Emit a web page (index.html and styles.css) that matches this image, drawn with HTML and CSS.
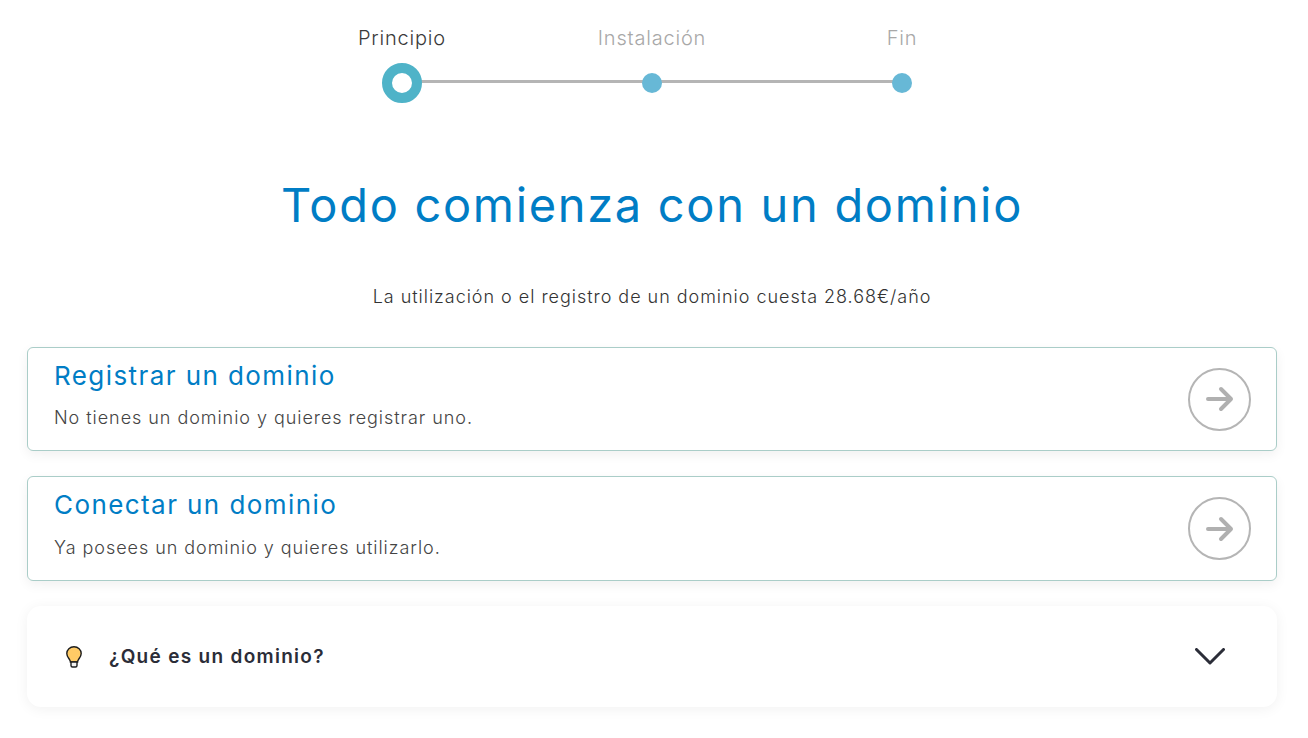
FILE: index.html
```html
<!DOCTYPE html>
<html lang="es">
<head>
<meta charset="utf-8">
<title>Todo comienza con un dominio</title>
<link rel="stylesheet" href="styles.css">
</head>
<body>
<main class="page">
  <ol class="stepper">
    <li class="step step-active"><span class="step-label">Principio</span><span class="dot"></span></li>
    <li class="step"><span class="step-label">Instalación</span><span class="dot"></span></li>
    <li class="step"><span class="step-label">Fin</span><span class="dot"></span></li>
  </ol>
  <h1 class="title">Todo comienza con un dominio</h1>
  <p class="subtitle">La utilización o el registro de un dominio cuesta 28.68€/año</p>
  <div class="options">
    <a class="option">
      <div class="option-text">
        <h2 class="option-title">Registrar un dominio</h2>
        <p class="option-desc">No tienes un dominio y quieres registrar uno.</p>
      </div>
      <span class="arrow-btn">
        <svg width="30" height="26" viewBox="0 0 30 26" fill="none" stroke="#b0b0b0" stroke-width="4" stroke-linecap="round" stroke-linejoin="round"><path d="M3 13H26M16 3L26 13L16 23"/></svg>
      </span>
    </a>
    <a class="option option-tall">
      <div class="option-text">
        <h2 class="option-title">Conectar un dominio</h2>
        <p class="option-desc">Ya posees un dominio y quieres utilizarlo.</p>
      </div>
      <span class="arrow-btn">
        <svg width="30" height="26" viewBox="0 0 30 26" fill="none" stroke="#b0b0b0" stroke-width="4" stroke-linecap="round" stroke-linejoin="round"><path d="M3 13H26M16 3L26 13L16 23"/></svg>
      </span>
    </a>
  </div>
  <section class="faq">
    <svg class="bulb" width="16" height="22" viewBox="0 0 16 22"><path d="M8 .8C3.900.8.800 3.700.800 7.500c0 2.700 1.500 4.200 2.600 5.800.6.9 1 1.700 1 2.700h7.200c0-1 .4-1.800 1-2.700 1.100-1.600 2.600-3.100 2.600-5.800C15.200 3.700 12.100.8 8 .8z" fill="#ffcb66" stroke="#1e1e1e" stroke-width="1.400"/><path d="M5 16v3.500c0 .9.600 1.500 1.500 1.500h3c.9 0 1.500-.6 1.500-1.500V16z" fill="#f2f2f2" stroke="#1e1e1e" stroke-width="1.400"/></svg>
    <h3 class="faq-title">¿Qué es un dominio?</h3>
    <svg class="chevron" width="30" height="17" viewBox="0 0 30 17" fill="none" stroke="#2b2d38" stroke-width="3" stroke-linecap="round" stroke-linejoin="round"><path d="M1.500 1.500L15 15L28.500 1.500"/></svg>
  </section>
</main>
</body>
</html>
```
FILE: styles.css
```css
* { box-sizing: border-box; }
html, body { margin: 0; padding: 0; background: #fff; }
body { font-family: Inter, "Open Sans", sans-serif; color: #333; overflow: hidden; }
.page { padding: 0 31px 0 27px; height: 738px; }

.stepper {
  position: relative;
  list-style: none;
  margin: 0 auto;
  padding: 26px 0 0;
  width: 750px;
  display: grid;
  grid-template-columns: repeat(3, 250px);
}
.stepper::before {
  content: "";
  position: absolute;
  left: 125px;
  right: 125px;
  top: 80px;
  height: 3px;
  background: #b5b5b5;
}
.step { display: flex; flex-direction: column; align-items: center; position: relative; }
.step-label { font-size: 20px; line-height: 25px; font-weight: 300; color: #a8a8a8; height: 37px; letter-spacing: 0.8px; white-space: nowrap; }
.step-active .step-label { color: #3a3a3a; }
.dot { width: 20px; height: 20px; border-radius: 50%; background: #67b8d6; margin-top: 10px; }
.step-active .dot { width: 40px; height: 40px; margin-top: 0; background: #fff; border: 10px solid #4fb3c8; }

.title {
  margin: 73px 0 0;
  text-align: center;
  font-size: 47px;
  line-height: 58px;
  font-weight: 400;
  color: #007dc5;
  letter-spacing: 1.68px;
}
.subtitle {
  margin: 51px 0 0;
  text-align: center;
  font-size: 18px;
  line-height: 24px;
  font-weight: 300;
  color: #333;
  letter-spacing: 0.97px;
}

.options { margin-top: 38px; display: flex; flex-direction: column; gap: 25px; }
.option {
  display: flex;
  align-items: center;
  justify-content: space-between;
  height: 104px;
  padding: 0 25px 0 26px;
  border: 1px solid #aacdc8;
  border-radius: 6px;
  background: #fff;
  box-shadow: 0 4px 12px rgba(0, 0, 0, 0.06);
}
.option-tall { height: 105px; }
.option-text { align-self: flex-start; padding-top: 11px; }
.option-title { margin: 0; font-size: 26px; line-height: 34px; font-weight: 400; color: #007dc5; letter-spacing: 1.42px; }
.option-desc { margin: 13px 0 0; font-size: 18px; line-height: 24px; font-weight: 300; color: #444; letter-spacing: 0.95px; }
.option-tall .option-desc { margin-top: 14px; }
.arrow-btn {
  width: 63px;
  height: 63px;
  border: 2px solid #b5b5b5;
  border-radius: 50%;
  display: flex;
  align-items: center;
  justify-content: center;
}

.faq {
  margin-top: 25px;
  height: 101px;
  display: flex;
  align-items: center;
  padding: 0 52px 0 39px;
  border-radius: 14px;
  background: #fff;
  box-shadow: 0 2px 14px rgba(0, 0, 0, 0.06);
}
.bulb { flex: none; }
.faq-title { margin: 0 0 0 27px; flex: 1; font-size: 19px; line-height: 24px; font-weight: 600; color: #2b2d38; letter-spacing: 1.3px; }
.chevron { flex: none; }
```
